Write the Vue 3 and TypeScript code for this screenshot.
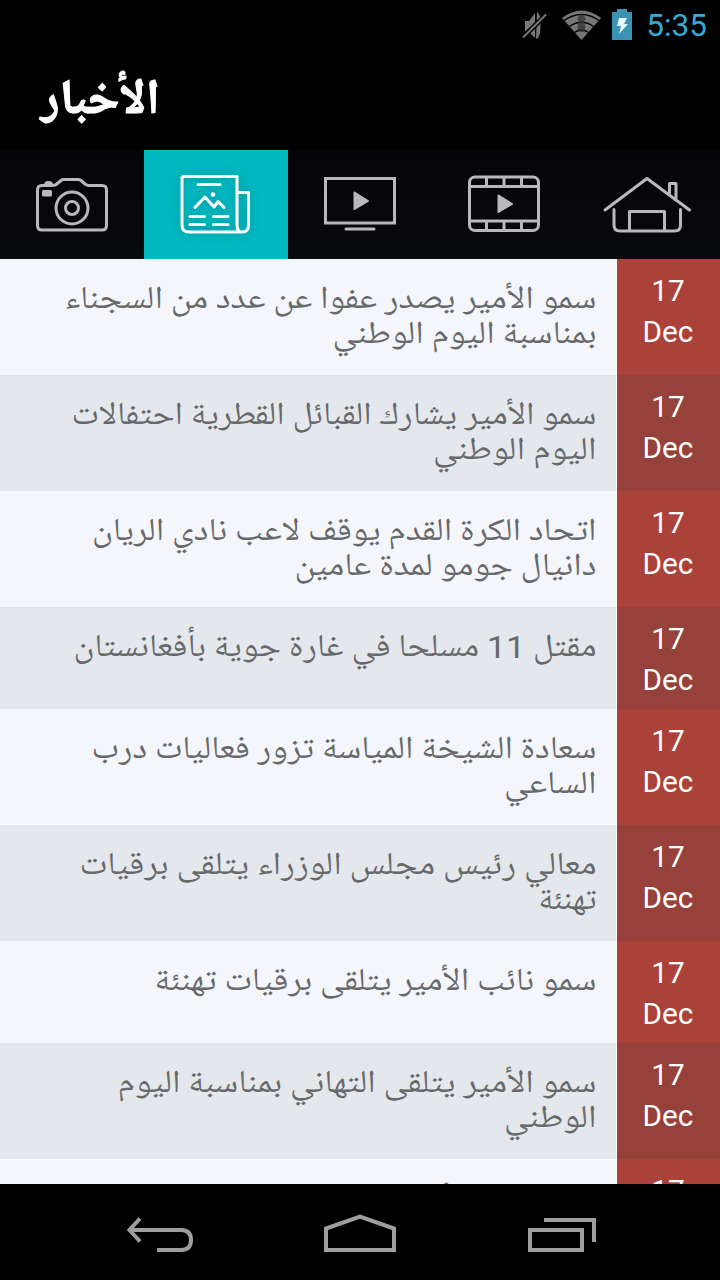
<script setup lang="ts">
interface Line { parts: string[]; width: number }
interface News { day: string; month: string; lines: Line[] }

// Digits are split out so they can be set in the Latin face.
const item = (...lines: [string, number][]): News => ({
  day: '17',
  month: 'Dec',
  lines: lines.map(([text, width]) => ({ parts: text.split(/(\d+)/), width })),
})

const isNumber = (s: string) => /^\d+$/.test(s)

const news: News[] = [
  item(['سمو الأمير يصدر عفوا عن عدد من السجناء', 532], ['بمناسبة اليوم الوطني', 264]),
  item(['سمو الأمير يشارك القبائل القطرية احتفالات', 525], ['اليوم الوطني', 163.5]),
  item(['اتحاد الكرة القدم يوقف لاعب نادي الريان', 504.5], ['دانيال جومو لمدة عامين', 302]),
  item(['مقتل 11 مسلحا في غارة جوية بأفغانستان', 523]),
  item(['سعادة الشيخة المياسة تزور فعاليات درب', 505], ['الساعي', 92.5]),
  item(['معالي رئيس مجلس الوزراء يتلقى برقيات', 517], ['تهنئة', 58]),
  item(['سمو نائب الأمير يتلقى برقيات تهنئة', 442]),
  item(['سمو الأمير يتلقى التهاني بمناسبة اليوم', 479], ['الوطني', 92.5]),
  item(['سمو نائب الأمير', 195]),
]
</script>

<template>
  <div class="screen">
    <div class="status">
      <svg class="status-icons" width="140" height="50" viewBox="500 0 140 50">
        <g fill="#777">
          <path d="M525 21h4l6-8v25l-6-6h-4z" />
          <path d="M537 12q5 3 3 21q-1 5-4 6z" />
          <path d="M522 38L547 14" stroke="#000" stroke-width="5" />
          <path d="M523 37.500L546 14.500" stroke="#777" stroke-width="2" />
        </g>
        <path d="M562 18Q581.500 3 601 18L581.500 40z" fill="#777" />
        <path d="M564 20.500Q581.500 8.500 599 20.500M569.500 26.500Q581.500 18 593.500 26.500M574.500 32.500Q581.500 27 588.500 32.500" fill="none" stroke="#000" stroke-width="1.500" />
        <path d="M581.500 13l4 5-1 4 1 5-1 5h-6l-1-5 1-5-1-4z" fill="#333" opacity=".75" />
        <path d="M612 12h5V9h10v3h5v28h-20z" fill="#3b93b3" />
        <path d="M619 18h8l-3 6h4l-9 10 2-8h-4z" fill="#e8fbff" />
      </svg>
      <span class="clock">5:35</span>
    </div>

    <header class="title">
      <svg width="118" height="60" class="fit">
        <text x="120" y="42.500" direction="rtl" textLength="119" lengthAdjust="spacingAndGlyphs">الأخبار</text>
      </svg>
    </header>

    <nav class="tabs">
      <button class="tab" aria-label="photos">
        <svg viewBox="0 0 144 109">
          <path d="M41 35.500H52Q56 35.500 58 33L61 30.500Q62 29.500 64 29.500H78Q80 29.500 81 30.500L85 34Q87 35.500 89 35.500H102Q106.500 35.500 106.500 40V75.500Q106.500 80 102 80H42Q37.500 80 37.500 75.500V40Q37.500 35.500 42 35.500" />
          <circle cx="72" cy="58" r="16" /><circle cx="72" cy="58" r="6.500" />
          <path d="M44 35Q44 31 48.500 31T53 35z" class="solid" />
          <rect x="42" y="40" width="10" height="6.500" rx="1.500" class="solid" />
        </svg>
      </button>
      <button class="tab active" aria-label="news">
        <svg viewBox="0 0 144 109">
          <path d="M38 26.500H93V75Q93 82 98.500 82Q104.500 82 104.500 75V42.500H94M38 26.500V75Q38 82 45 82H98.500" />
          <path d="M54 34.500H76M46 66.500H60.500M69.500 66.500H84M46 74.500H60.500M69.500 74.500H84" stroke-linecap="round" />
          <path d="M51 57.500L61 47L70 57M67 53.500L70 57L74 51.500L80 57.500" stroke-linecap="round" />
          <circle cx="69" cy="44.500" r="2.300" class="solid" />
        </svg>
      </button>
      <button class="tab" aria-label="live">
        <svg viewBox="0 0 144 109">
          <rect x="37.500" y="28.500" width="69" height="44.500" class="sharp" />
          <path d="M66.500 42.500L80 51L66.500 59z" class="solid play" />
          <path d="M58 79H86" stroke-linecap="round" />
        </svg>
      </button>
      <button class="tab" aria-label="videos">
        <svg viewBox="0 0 144 109">
          <rect x="37.500" y="27" width="69" height="53.500" rx="5.500" />
          <path d="M37.500 36.500H106.500M37.500 71H106.500M54.500 27V36.500M72 27V36.500M89.500 27V36.500M54.500 71V80.500M72 71V80.500M89.500 71V80.500" />
          <path d="M66.500 45.500L80 54L66.500 62z" class="solid play" />
        </svg>
      </button>
      <button class="tab" aria-label="home">
        <svg viewBox="0 0 144 109">
          <path d="M29 60L71 28.500L113.500 60" stroke-linecap="round" />
          <path d="M93.500 43V33.500H100V48M38 59.500V75Q38 81 44 81H98.500Q104.500 81 104.500 75V59.500M53.500 81V61.500H88.500V81" stroke-linecap="round" />
        </svg>
      </button>
    </nav>

    <main class="list">
      <article v-for="(n, i) in news" :key="i" class="row">
        <div class="headline">
          <svg v-for="(l, j) in n.lines" :key="j" class="line fit" width="577" height="35">
            <text x="576.500" y="28.500" direction="rtl" :textLength="l.width" lengthAdjust="spacingAndGlyphs"><template v-for="(p, k) in l.parts" :key="k"><tspan v-if="isNumber(p)" class="num" dy="2">{{ p }}</tspan><tspan v-else :dy="k ? -2 : 0">{{ p }}</tspan></template></text>
          </svg>
        </div>
        <div class="date"><span>{{ n.day }}</span><span>{{ n.month }}</span></div>
      </article>
    </main>

    <footer class="system">
      <svg width="720" height="96" viewBox="0 1184 720 96" fill="none" stroke="#9e9e9e" stroke-width="4">
        <path d="M130 1230H181Q191 1230 191 1240T181 1250H157" />
        <path d="M140 1218.500L129.500 1230L140 1241.500" />
        <path d="M326 1250V1228.500L360 1216.500L394 1228.500V1250z" />
        <path d="M530 1230H582V1250H530zM544 1220H594V1242" />
      </svg>
    </footer>
  </div>
</template>

<style>
body { margin: 0; background: #000; }
</style>

<style scoped>
.screen {
  width: 720px;
  height: 1280px;
  display: flex;
  flex-direction: column;
  overflow: hidden;
  background: #000;
  font-family: Roboto, "Noto Sans", "DejaVu Sans", sans-serif;
}
svg { display: block; }
.fit { overflow: visible; font-family: "Noto Naskh Arabic", "Droid Arabic Naskh", "Noto Sans Arabic", "DejaVu Sans", sans-serif; }
.status { height: 50px; display: flex; justify-content: flex-end; align-items: center; padding-right: 13px; gap: 6px; flex: none; }
.clock { color: #33a9d6; font-size: 31.5px; line-height: 50px; width: 61px; text-align: right; padding-top: 2px; white-space: nowrap; }
.status { box-sizing: border-box; }
.title { height: 100px; box-sizing: border-box; padding: 20px 0 0 40px; flex: none; }
.title text { fill: #fff; font-size: 49px; font-weight: 700; stroke: #fff; stroke-width: 1; }
.tabs { display: flex; height: 109px; flex: none; background: linear-gradient(#050508, #08090c); }
.tab { width: 144px; height: 109px; border: 0; padding: 0; background: none; }
.tab svg { width: 144px; height: 109px; fill: none; stroke: #b9b9bb; stroke-width: 3; stroke-linejoin: round; }
.tab .solid { fill: #b9b9bb; stroke: none; }
.tab .play { stroke: #b9b9bb; stroke-width: 2; }
.tab .sharp { stroke-linejoin: miter; }
.tab.active { background: #01b8c0; }
.tab.active svg { stroke: #fff; filter: drop-shadow(0 0 5px rgba(0, 60, 70, .3)); }
.tab.active .solid { fill: #fff; }
.list { flex: 1; min-height: 0; overflow: hidden; display: flex; flex-direction: column; }
.row { display: flex; flex: none; min-height: 102px; background: #f4f6fb; }
.headline { width: 577px; padding: 20px 19px 26px 20px; border-right: 1px solid #fbf8f8; }
.headline text { fill: #68696b; font-size: 32px; }
.headline .num { font-family: Roboto, sans-serif; font-size: 31px; }
.row:nth-child(even) { background: #e4e8ec; }
.date { width: 103px; display: flex; flex-direction: column; align-items: center; padding: 11px 1px 0 0; box-sizing: border-box; background: #aa4239; color: #fff; font-size: 29.7px; line-height: 41px; }
.row:nth-child(even) .date { background: #964139; }
.system { height: 96px; flex: none; background: #000; }
</style>
